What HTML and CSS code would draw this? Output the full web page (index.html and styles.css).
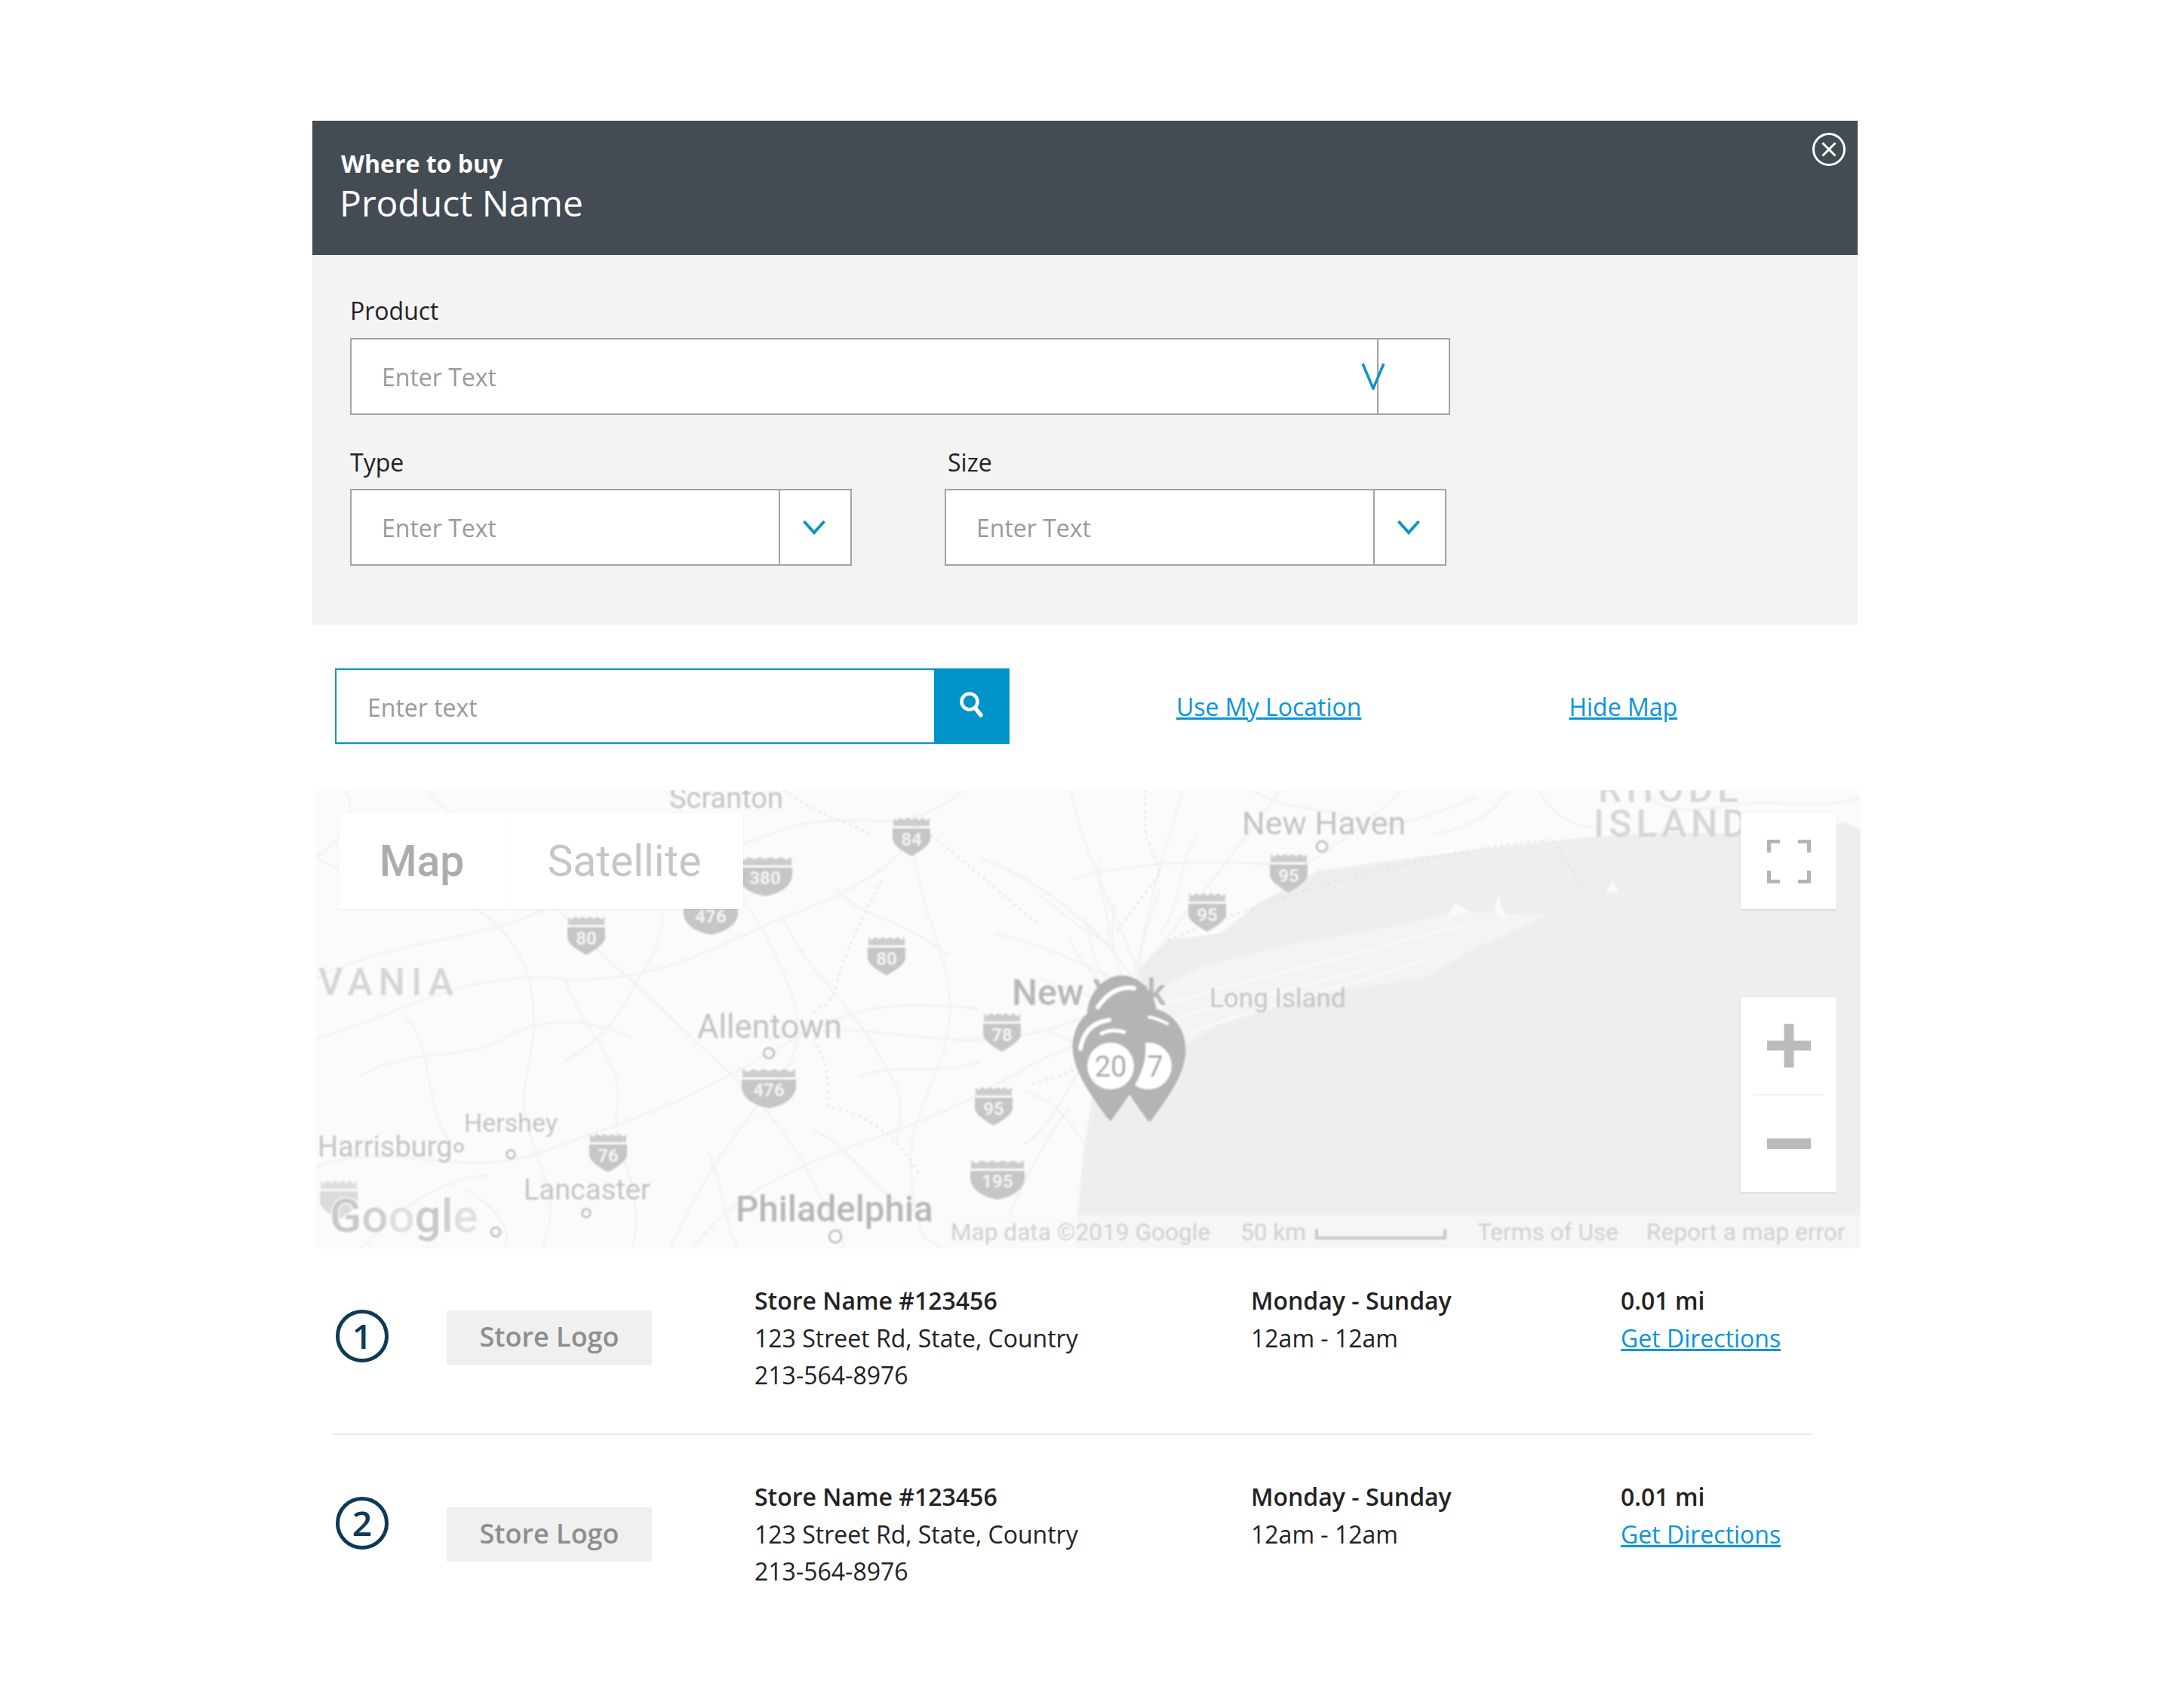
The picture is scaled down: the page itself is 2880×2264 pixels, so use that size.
FILE: index.html
```html
<!DOCTYPE html>
<html lang="en">
<head>
    <meta charset="UTF-8">
    <meta name="viewport" content="width=device-width, initial-scale=1.0">
    <title>Where to buy</title>
    <link rel="stylesheet" href="styles.css">
</head>
<body>

<div class="modal">
    <!-- Header -->
    <div class="modal-header">
        <div class="header-small">Where to buy</div>
        <div class="header-large">Product Name</div>
        <button type="button" class="close-btn">
            <svg width="44" height="44" viewBox="0 0 44 44"><circle cx="22" cy="22" r="20.5" fill="none" stroke="#fff" stroke-width="3"/><path d="M13.5 13.5 L30.5 30.5 M30.5 13.5 L13.5 30.5" fill="none" stroke="#fff" stroke-width="3"/></svg>
        </button>
    </div>

    <!-- Filters -->
    <div class="filters">
        <label class="field-label">Product</label>
        <div class="select select-wide">
            <span class="select-text">Enter Text</span>
            <svg class="chevron-tall" width="32" height="36" viewBox="0 0 32 36"><path d="M2 1 L16 34 L30 1" fill="none" stroke="#0f94c4" stroke-width="3.5"/></svg>
            <span class="select-btn"></span>
        </div>
        <div class="filter-row">
            <div class="filter-col">
                <label class="field-label">Type</label>
                <div class="select select-type">
                    <span class="select-text">Enter Text</span>
                    <span class="select-btn">
                        <svg width="30" height="20" viewBox="0 0 30 20"><path d="M1.5 2 L15 17 L28.5 2" fill="none" stroke="#0f94c4" stroke-width="4"/></svg>
                    </span>
                </div>
            </div>
            <div class="filter-col">
                <label class="field-label field-label-size">Size</label>
                <div class="select select-type">
                    <span class="select-text">Enter Text</span>
                    <span class="select-btn">
                        <svg width="30" height="20" viewBox="0 0 30 20"><path d="M1.5 2 L15 17 L28.5 2" fill="none" stroke="#0f94c4" stroke-width="4"/></svg>
                    </span>
                </div>
            </div>
        </div>
    </div>

    <!-- Search -->
    <div class="search-row">
        <div class="search-box">
            <span class="search-text">Enter text</span>
            <span class="search-btn">
                <svg width="34" height="34" viewBox="0 0 34 34"><circle cx="14" cy="13" r="10.5" fill="none" stroke="#fff" stroke-width="4.5"/><path d="M22 22 L29 31" stroke="#fff" stroke-width="5.5" stroke-linecap="round"/></svg>
            </span>
        </div>
        <a href="#" class="link link-location">Use My Location</a>
        <a href="#" class="link link-hide">Hide Map</a>
    </div>

    <!-- Map -->
    <div class="map">
        <svg class="map-canvas" width="2048" height="608" viewBox="0 0 2048 608">
            <defs>
                <g id="shield2">
                    <path d="M-24 -14 V-25 L-20 -21 L-15 -25 L-10 -22 L-5 -25 L0 -22 L5 -25 L10 -22 L15 -25 L20 -21 L24 -25 V-14Z" fill="#cdcdcd"/>
                    <path d="M-25 -11 H25 V2 C25 12 10 20 0 26 C-10 20 -25 12 -25 2Z" fill="#c6c6c6"/>
                </g>
                <g id="shield3">
                    <path d="M-35 -14 V-25 L-28 -21 L-21 -25 L-14 -22 L-7 -25 L0 -22 L7 -25 L14 -22 L21 -25 L28 -21 L35 -25 V-14Z" fill="#cdcdcd"/>
                    <path d="M-36 -11 H36 V-2 C36 14 18 24 0 27 C-18 24 -36 14 -36 -2Z" fill="#c6c6c6"/>
                </g>
                <path id="pin" d="M0 74 C-8 60 -42 22 -46 -14 C-50 -50 -25 -76 0 -76 C25 -76 50 -50 46 -14 C42 22 8 60 0 74Z" fill="#b4b4b4"/>
            </defs>

            <rect width="2048" height="608" fill="#fbfbfb"/>

            <!-- roads -->
            <g class="roads">
                <path d="M0 250 C120 190 260 200 330 140 S480 110 600 60 S760 80 860 0"/>
                <path d="M0 90 C70 130 170 120 230 170 S300 290 280 380 S340 520 300 608"/>
                <path d="M0 330 C110 300 190 240 320 250 S520 210 620 170 S780 100 800 40"/>
                <path d="M0 500 C100 460 190 520 300 480 S480 420 600 350 S760 280 880 290"/>
                <path d="M150 0 C190 60 250 60 300 130 S410 240 480 310 S610 420 660 520 S690 560 700 608"/>
                <path d="M470 0 C500 70 560 120 600 200 S660 330 610 390 S520 500 470 608"/>
                <path d="M790 60 C800 170 850 230 840 310 S780 430 790 520 S810 590 830 608"/>
                <path d="M600 330 C720 300 800 340 900 330 S1000 300 1090 280"/>
                <path d="M500 608 C570 510 700 480 800 440 S940 360 1030 330"/>
                <path d="M1000 0 C1020 90 1060 160 1090 240"/>
                <path d="M1150 0 C1130 70 1100 150 1090 250"/>
                <path d="M1280 0 C1220 80 1150 170 1100 230"/>
                <path d="M880 90 C960 120 1040 180 1090 260"/>
                <path d="M900 190 C980 210 1040 240 1095 270"/>
                <path d="M1440 0 C1400 40 1360 70 1310 100"/>
                <path d="M940 470 C980 440 1000 390 1030 340"/>
                <path d="M900 608 C930 540 960 470 1000 420"/>
                <path d="M1000 120 C1060 100 1160 90 1280 100"/>
                <path d="M1620 0 C1640 30 1660 50 1700 50"/>
                <path d="M40 0 C60 40 30 70 0 90"/>
                <path d="M60 380 C120 340 200 360 250 330 S360 300 420 330"/>
                <path d="M60 608 C110 560 150 520 230 510"/>
                <path d="M330 250 C360 330 410 360 400 420 S440 520 420 608"/>
                <path d="M120 300 C160 350 140 410 180 470"/>
                <path d="M620 170 C650 240 700 270 740 340 S780 400 770 470"/>
                <path d="M420 80 C470 130 470 180 440 230 S400 320 330 360"/>
                <path d="M690 130 C720 170 780 170 840 220"/>
                <path d="M660 450 C720 480 740 540 800 560"/>
                <path d="M1240 0 C1290 30 1330 20 1380 40 S1480 30 1540 10"/>
                <path d="M1580 0 C1560 40 1520 50 1480 60"/>
                <path d="M1760 0 C1780 30 1820 30 1880 20 S1990 30 2048 10"/>
                <path d="M200 530 C250 560 260 590 250 608"/>
                <path d="M520 480 C540 520 540 570 560 608"/>
                <path d="M720 380 C770 360 830 380 880 360"/>
            </g>
            <g class="roads-thin">
                <path d="M1000 200 C1020 240 1050 260 1070 290"/>
                <path d="M960 250 C1000 270 1040 270 1080 300"/>
                <path d="M1020 170 C1030 220 1040 250 1070 280"/>
                <path d="M1060 150 C1050 200 1060 240 1085 270"/>
                <path d="M1120 130 C1100 190 1090 220 1080 260"/>
                <path d="M970 320 C1000 330 1020 340 1040 370"/>
                <path d="M1040 90 C1030 130 1060 170 1050 210"/>
                <path d="M1170 60 C1140 100 1150 150 1120 190"/>
                <path d="M960 140 C1000 170 1020 190 1060 210"/>
                <path d="M940 400 C980 410 1000 440 1020 470"/>
            </g>

            <!-- water -->
            <path class="water" d="M2048 54 L2025 42 L1990 60 L1901 58 L1777 56 L1653 66 L1528 81 L1445 91 L1330 107 L1250 150 L1200 190 L1130 199 L1089 240 L1072 356 L1031 398 L1018 481 L1010 564 L1006 608 L2048 608Z"/>
            <path class="long-island" d="M1089 240 L1105 270 L1180 232 L1280 207 L1445 178 L1512 161 L1632 166 L1528 215 L1470 249 L1362 265 L1280 286 L1197 311 L1155 336 L1072 356Z"/>
            <g class="island-lines">
                <path d="M1110 290 C1200 260 1320 235 1440 200 L1520 180"/>
                <path d="M1120 310 C1210 280 1300 265 1400 235"/>
                <path d="M1160 320 C1250 290 1340 270 1470 225"/>
            </g>
            <path class="island-bits" d="M1719 120 L1728 136 L1710 136Z M1568 140 L1578 172 L1562 160Z M1510 150 L1530 162 L1500 170Z"/>

            <!-- state and harbour borders -->
            <g class="borders">
                <path d="M815 60 C880 110 900 130 960 180"/>
                <path d="M620 0 C660 30 700 40 740 60"/>
                <path d="M1130 199 C1300 130 1480 80 1640 66 L1680 130"/>
                <path d="M750 120 C720 180 700 220 690 260 S660 280 660 300"/>
                <path d="M660 330 C680 360 680 390 680 420 C740 430 780 470 800 510"/>
                <path d="M1100 0 V60 L1120 110 L1060 190"/>
                <path d="M950 390 C985 380 1005 372 1025 362"/>
            </g>

            <!-- shields -->
            <use href="#shield2" x="790" y="62"/><text class="shield-text" x="790" y="74">84</text>
            <use href="#shield3" x="596" y="114"/><text class="shield-text" x="596" y="125">380</text>
            <use href="#shield3" x="524" y="165"/><text class="shield-text" x="524" y="176">476</text>
            <use href="#shield2" x="359" y="193"/><text class="shield-text" x="359" y="205">80</text>
            <use href="#shield2" x="757" y="220"/><text class="shield-text" x="757" y="232">80</text>
            <use href="#shield2" x="910" y="321"/><text class="shield-text" x="910" y="333">78</text>
            <use href="#shield3" x="601" y="395"/><text class="shield-text" x="601" y="406">476</text>
            <use href="#shield2" x="899" y="419"/><text class="shield-text" x="899" y="431">95</text>
            <use href="#shield2" x="388" y="481"/><text class="shield-text" x="388" y="493">76</text>
            <use href="#shield3" x="904" y="516"/><text class="shield-text" x="904" y="527">195</text>
            <use href="#shield2" x="1290" y="110"/><text class="shield-text" x="1290" y="122">95</text>
            <use href="#shield2" x="1182" y="162"/><text class="shield-text" x="1182" y="174">95</text>
            <use class="shield-faded" href="#shield2" x="31" y="543"/>

            <!-- places -->
            <text class="place" x="469" y="24" font-size="38">Scranton</text>
            <text class="place" x="1228" y="59" font-size="43">New Haven</text>
            <text class="place-state" x="1700" y="16" font-size="50">RHODE</text>
            <text class="place-state" x="1694" y="62" font-size="50">ISLAND</text>
            <text class="place-state place-vania" x="4" y="272" font-size="50">VANIA</text>
            <text class="place" x="506" y="329" font-size="43.5">Allentown</text>
            <text class="place-bold" x="923" y="285" font-size="48">New York</text>
            <text class="place" x="1185" y="288" font-size="35">Long Island</text>
            <text class="place" x="197" y="453" font-size="34">Hershey</text>
            <text class="place" x="3" y="486" font-size="38">Harrisburg</text>
            <text class="place" x="276" y="543" font-size="38">Lancaster</text>
            <text class="place-bold" x="557" y="572" font-size="47.5">Philadelphia</text>

            <!-- city dots -->
            <g class="dots">
                <circle cx="601" cy="349" r="7"/>
                <circle cx="1334" cy="75" r="7"/>
                <circle cx="190" cy="474" r="5.5"/>
                <circle cx="259" cy="483" r="5.5"/>
                <circle cx="359" cy="561" r="5.5"/>
                <circle cx="239" cy="586" r="6"/>
                <circle cx="689" cy="592" r="8"/>
            </g>

            <!-- footer strip -->
            <rect class="map-strip" x="832" y="564" width="1216" height="44"/>
            <text class="map-foot" x="842" y="597">Map data ©2019 Google</text>
            <text class="map-foot" x="1226" y="597">50 km</text>
            <path class="scale-bar" d="M1327 582 V594 H1497 V582"/>
            <text class="map-foot" x="1540" y="597">Terms of Use</text>
            <text class="map-foot" x="1764" y="597">Report a map error</text>

            <text class="google" x="19" y="586"><tspan class="g-a">G</tspan><tspan class="g-b">o</tspan><tspan class="g-c">o</tspan><tspan class="g-a">g</tspan><tspan class="g-b">l</tspan><tspan class="g-c">e</tspan></text>

            <!-- cluster pins -->
            <use href="#pin" x="1107" y="366"/>
            <use href="#pin" x="1069" y="322"/>
            <use href="#pin" x="1104" y="366"/>
            <circle cx="1104" cy="366" r="31" fill="#fff"/>
            <text class="pin-text" x="1113" y="380">7</text>
            <use href="#pin" x="1050" y="362"/>
            <use href="#pin" x="1054" y="366"/>
            <circle cx="1054" cy="366" r="31" fill="#fff"/>
            <text class="pin-text" x="1054" y="380">20</text>
            <g class="pin-shine">
                <path d="M1037 288 Q1058 258 1085 263" stroke-width="6"/>
                <path d="M1014 343 Q1019 310 1052 305" stroke-width="6"/>
                <path d="M1042 323 Q1055 316 1072 321" stroke-width="5"/>
                <path d="M1105 301 Q1118 304 1129 310" stroke-width="4"/>
            </g>
        </svg>

        <!-- Map controls -->
        <div class="map-type">
            <div class="map-type-btn map-type-active">Map</div>
            <div class="map-type-btn">Satellite</div>
        </div>
        <div class="map-side">
            <div class="map-ctrl">
                <svg width="58" height="58" viewBox="0 0 58 58"><path d="M2.5 17 V2.5 H17 M41 2.5 H55.5 V17 M2.5 41 V55.5 H17 M41 55.5 H55.5 V41" fill="none" stroke="#b5b5b5" stroke-width="5"/></svg>
            </div>
            <div class="map-zoom">
                <div class="map-zoom-btn">
                    <svg width="58" height="58" viewBox="0 0 58 58"><path d="M29 0 V58 M0 29 H58" stroke="#bbb" stroke-width="13"/></svg>
                </div>
                <div class="map-zoom-line"></div>
                <div class="map-zoom-btn">
                    <svg width="58" height="14" viewBox="0 0 58 14"><rect width="58" height="14" fill="#bbb"/></svg>
                </div>
            </div>
        </div>
    </div>

    <!-- Store list -->
    <div class="stores">
        <div class="store store-first">
            <div class="store-num">1</div>
            <div class="store-logo">Store Logo</div>
            <div class="store-col store-info">
                <div class="store-strong">Store Name #123456</div>
                <div>123 Street Rd, State, Country</div>
                <div>213-564-8976</div>
            </div>
            <div class="store-col store-hours">
                <div class="store-strong">Monday - Sunday</div>
                <div>12am - 12am</div>
            </div>
            <div class="store-col">
                <div class="store-strong">0.01 mi</div>
                <a href="#" class="link">Get Directions</a>
            </div>
        </div>
        <div class="store store-second">
            <div class="store-num">2</div>
            <div class="store-logo">Store Logo</div>
            <div class="store-col store-info">
                <div class="store-strong">Store Name #123456</div>
                <div>123 Street Rd, State, Country</div>
                <div>213-564-8976</div>
            </div>
            <div class="store-col store-hours">
                <div class="store-strong">Monday - Sunday</div>
                <div>12am - 12am</div>
            </div>
            <div class="store-col">
                <div class="store-strong">0.01 mi</div>
                <a href="#" class="link">Get Directions</a>
            </div>
        </div>
    </div>
</div>

</body>
</html>
```

FILE: styles.css
```css
body {
    margin: 0;
    background-color: #ffffff;
    font-family: "Open Sans", Arial, sans-serif;
    color: #222;
}

.modal {
    width: 2052px;
    margin-left: 414px;
    padding-top: 160px;
}

/* header */
.modal-header {
    position: relative;
    box-sizing: border-box;
    width: 2048px;
    height: 178px;
    padding: 36px 0 0 38px;
    background-color: #434b53;
    color: #ffffff;
}

.header-small {
    font-size: 32px;
    font-weight: 700;
    line-height: 42px;
}

.header-large {
    font-size: 48px;
    line-height: 61px;
    margin-left: -2px;
}

.close-btn {
    position: absolute;
    top: 16px;
    right: 16px;
    width: 44px;
    height: 44px;
    padding: 0;
    border: none;
    background: none;
}

/* filters */
.filters {
    box-sizing: border-box;
    width: 2048px;
    height: 490px;
    padding: 52px 0 0 50px;
    background-color: #f3f3f3;
}

.field-label {
    display: block;
    font-size: 32px;
    line-height: 44px;
    margin-bottom: 14px;
}

.filter-col .field-label {
    margin-bottom: 13px;
}

.field-label-size {
    margin-left: 4px;
}

.select {
    display: flex;
    align-items: center;
    box-sizing: border-box;
    height: 102px;
    background-color: #ffffff;
    border: 2px solid #a3a3a3;
}

.select-wide {
    width: 1458px;
}

.select-type {
    width: 665px;
}

.select-text {
    flex: 1;
    padding-left: 40px;
    font-size: 32px;
    color: #9a9a9a;
}

.select-btn {
    display: flex;
    align-items: center;
    justify-content: center;
    box-sizing: border-box;
    width: 95px;
    height: 100%;
    padding-right: 3px;
    border-left: 2px solid #a3a3a3;
}

.chevron-tall {
    margin-right: -11px;
    position: relative;
    z-index: 1;
}

.filter-row {
    display: flex;
    gap: 123px;
    margin-top: 41px;
}

/* search row */
.search-row {
    display: flex;
    align-items: center;
    height: 100px;
    margin: 58px 0 61px 30px;
}

.search-box {
    display: flex;
    align-items: center;
    box-sizing: border-box;
    width: 894px;
    height: 100px;
    border: 2px solid #0093c9;
    border-right: none;
}

.search-text {
    flex: 1;
    padding: 3px 0 0 41px;
    font-size: 32px;
    color: #9a9a9a;
}

.search-btn {
    display: flex;
    align-items: center;
    justify-content: center;
    width: 100px;
    height: 100%;
    padding-bottom: 4px;
    box-sizing: border-box;
    background-color: #0093c9;
}

.link {
    font-size: 32px;
    color: #0795dd;
}

.link-location {
    margin-left: 221px;
}

.link-hide {
    margin-left: 275px;
}

/* map */
.map {
    position: relative;
    width: 2048px;
    height: 608px;
    margin-left: 4px;
    overflow: hidden;
}

.map-canvas {
    display: block;
    filter: blur(0.8px);
}

.water {
    fill: #eeeeee;
}

.long-island {
    fill: #f4f4f4;
}

.island-lines path {
    fill: none;
    stroke: #fafafa;
    stroke-width: 3;
}

.island-bits {
    fill: #fafafa;
}

.roads path {
    fill: none;
    stroke: #f3f3f3;
    stroke-width: 3;
}

.roads-thin path {
    fill: none;
    stroke: #f1f1f1;
    stroke-width: 2;
}

.borders path {
    fill: none;
    stroke: #dcdcdc;
    stroke-width: 2;
    stroke-dasharray: 3 6;
}

.place, .place-bold, .place-state, .map-foot, .shield-text, .pin-text, .google {
    font-family: Roboto, Arial, sans-serif;
}

.place {
    fill: #c4c4c4;
}

.place-bold {
    fill: #b8b8b8;
    font-weight: 500;
}

.place-state {
    fill: #d6d6d6;
    font-weight: 500;
    letter-spacing: 6px;
}

.place-vania {
    letter-spacing: 8px;
}

.dots circle {
    fill: none;
    stroke: #bdbdbd;
    stroke-width: 2.5;
}

.shield-text {
    fill: #f4f4f4;
    font-size: 24px;
    font-weight: 700;
    text-anchor: middle;
}

.shield-faded {
    opacity: 0.6;
}

.map-strip {
    fill: #fafafa;
    opacity: 0.7;
}

.map-foot {
    fill: #cfcfcf;
    font-size: 31.6px;
}

.scale-bar {
    fill: none;
    stroke: #c9c9c9;
    stroke-width: 4;
}

.google {
    font-size: 62px;
    font-weight: 500;
    stroke: #ffffff;
    stroke-width: 3px;
    paint-order: stroke;
}

.g-a { fill: #c9c9c9; }
.g-b { fill: #cfcfcf; }
.g-c { fill: #e0e0e0; }

.pin-text {
    fill: #ababab;
    font-size: 38px;
    text-anchor: middle;
}

.pin-shine path {
    fill: none;
    stroke: #ffffff;
    stroke-linecap: round;
}

.map-type {
    position: absolute;
    top: 31px;
    left: 31px;
    display: flex;
    background-color: #ffffff;
    box-shadow: 0 1px 3px rgba(0, 0, 0, 0.06);
    font-family: Roboto, Arial, sans-serif;
    font-size: 57px;
    color: #c6c6c6;
}

.map-type-btn {
    display: flex;
    align-items: center;
    justify-content: center;
    height: 127px;
    width: 220px;
}

.map-type-btn + .map-type-btn {
    width: 315px;
    border-left: 1px solid #f4f4f4;
}

.map-type-active {
    font-weight: 500;
    color: #acacac;
}

.map-side {
    position: absolute;
    top: 31px;
    right: 32px;
    display: flex;
    flex-direction: column;
    gap: 117px;
}

.map-ctrl {
    display: flex;
    align-items: center;
    justify-content: center;
    width: 127px;
    height: 127px;
    background-color: #ffffff;
    box-shadow: 0 1px 3px rgba(0, 0, 0, 0.1);
}

.map-zoom {
    display: flex;
    flex-direction: column;
    align-items: center;
    width: 127px;
    height: 258px;
    background-color: #ffffff;
    box-shadow: 0 1px 3px rgba(0, 0, 0, 0.1);
}

.map-zoom-btn {
    display: flex;
    align-items: center;
    justify-content: center;
    height: 128px;
    width: 100%;
}

.map-zoom-line {
    width: 94px;
    height: 2px;
    background-color: #f2f2f2;
}

/* stores */
.store {
    display: flex;
    box-sizing: border-box;
    width: 1962px;
    margin-left: 27px;
    font-size: 32px;
    line-height: 49.5px;
}

.store-first {
    height: 247px;
    padding-top: 44px;
    border-bottom: 2px solid #ececec;
}

.store-second {
    padding-top: 57px;
}

.store-num {
    flex: none;
    box-sizing: border-box;
    width: 70px;
    height: 70px;
    margin: 37px 0 0 4px;
    border: 5px solid #0f3a57;
    border-radius: 50%;
    color: #0f3a57;
    font-size: 46px;
    font-weight: 600;
    line-height: 58px;
    text-align: center;
}

.store-second .store-num {
    margin-top: 25px;
}

.store-logo {
    flex: none;
    width: 272px;
    height: 72px;
    margin: 38px 0 0 77px;
    background-color: #f0f0f0;
    color: #8e8e8e;
    font-size: 36px;
    font-weight: 600;
    line-height: 70px;
    text-align: center;
}

.store-second .store-logo {
    margin-top: 39px;
}

.store-col {
    flex: none;
}

.store-info {
    width: 658px;
    margin-left: 136px;
}

.store-hours {
    width: 490px;
}

.store-strong {
    font-weight: 600;
}
```
